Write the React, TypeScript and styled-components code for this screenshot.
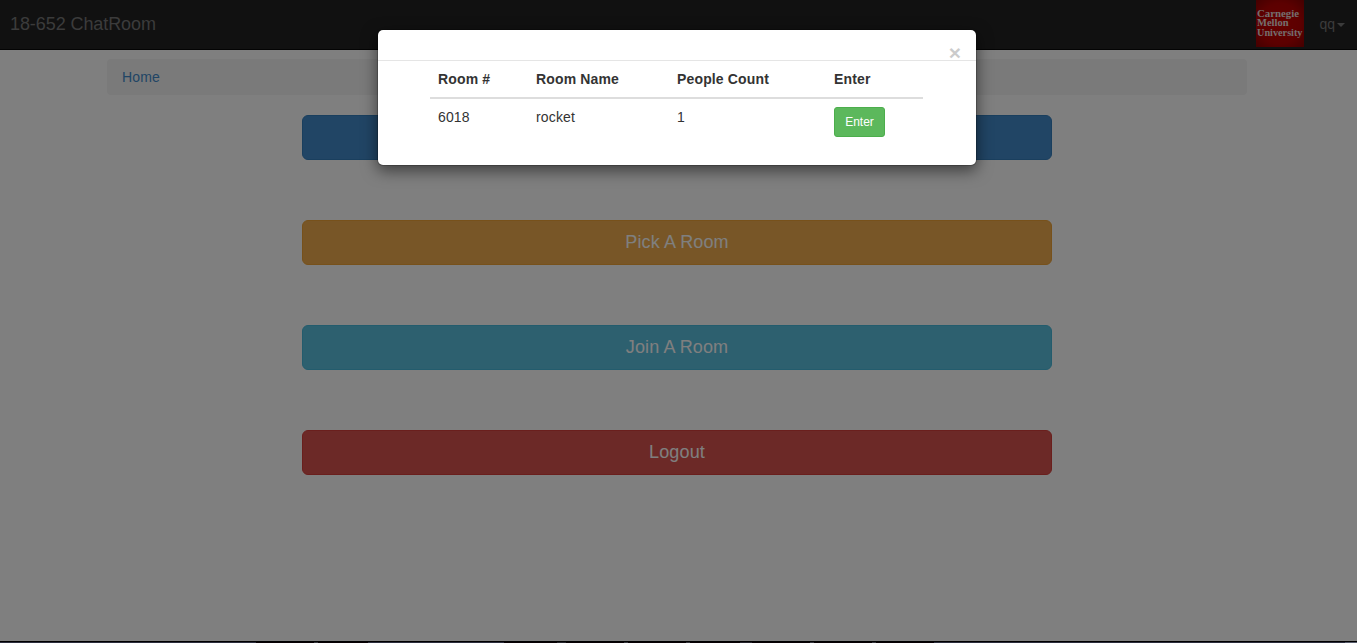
import React from "react";
import styled, { createGlobalStyle } from "styled-components";

const GlobalStyle = createGlobalStyle`
  *, *::before, *::after { box-sizing: border-box; }
  html, body { margin: 0; height: 643px; overflow: hidden; }
  body {
    font-family: "Liberation Sans", Arial, sans-serif;
    font-size: 14px;
    line-height: 20px;
    color: #333;
    background: #fff;
  }
`;

const Screen = styled.div`
  position: relative;
  display: flex;
  flex-direction: column;
  height: 643px;
  overflow: hidden;
`;

const Page = styled.div`
  flex: 1;
  display: flex;
  flex-direction: column;
`;

const Navbar = styled.nav`
  display: flex;
  justify-content: space-between;
  height: 50px;
  background: #222;
  border-bottom: 1px solid #080808;
  color: #777;
`;

const Brand = styled.a`
  padding: 14px 10px;
  font-size: 18px;
  letter-spacing: -0.08px;
`;

const NavRight = styled.div`
  display: flex;
  align-items: flex-start;
`;

const Logo = styled.svg`
  display: block;
  width: 48px;
  height: 47px;
`;

const UserMenu = styled.a`
  display: flex;
  align-items: center;
  gap: 2px;
  height: 48px;
  padding: 0 12px 0 15px;
`;

const Caret = styled.span`
  margin-top: 2px;
  border-top: 4px solid currentColor;
  border-left: 4px solid transparent;
  border-right: 4px solid transparent;
`;

const Breadcrumb = styled.div`
  width: 1140px;
  height: 36px;
  margin: 9px 0 20px 107px;
  padding: 8px 15px;
  border-radius: 4px;
  background: #f5f5f5;
`;

const HomeLink = styled.a`
  color: #428bca;
  letter-spacing: 0.15px;
`;

const Actions = styled.div`
  display: flex;
  flex-direction: column;
  gap: 60px;
  width: 750px;
  margin-left: 302px;
`;

const ActionButton = styled.button<{ $fill: string; $edge: string }>`
  height: 45px;
  padding: 0 0 2px;
  border: 1px solid ${(p) => p.$edge};
  border-radius: 6px;
  background: ${(p) => p.$fill};
  color: #fff;
  font: 18px/24px "Liberation Sans", Arial, sans-serif;
  letter-spacing: 0.12px;
`;

const Backdrop = styled.div`
  position: absolute;
  inset: 0 0 2px;
  display: flex;
  justify-content: flex-start;
  align-items: flex-start;
  padding: 29px 0 0 377px;
  background: rgba(0, 0, 0, 0.5);
`;

const Dialog = styled.section`
  width: 600px;
  height: 137px;
  border: 1px solid rgba(0, 0, 0, 0.2);
  border-radius: 6px;
  background: #fff;
  background-clip: padding-box;
  box-shadow: 0 5px 15px rgba(0, 0, 0, 0.5);
`;

const DialogHeader = styled.header`
  display: flex;
  justify-content: flex-end;
  height: 31px;
  padding: 12px 15px 0;
  border-bottom: 1px solid #e5e5e5;
`;

const CloseButton = styled.button`
  height: 21px;
  padding: 0;
  border: 0;
  background: transparent;
  color: #000;
  font: bold 21px/21px "Liberation Sans", Arial, sans-serif;
  text-shadow: 0 1px 0 #fff;
  opacity: 0.2;
`;

const RoomTable = styled.table`
  width: 493px;
  margin-left: 52px;
  border-collapse: collapse;
  table-layout: fixed;
`;

const HeadCell = styled.th<{ $width: number }>`
  width: ${(p) => p.$width}px;
  height: 37px;
  padding: 7px 8px 8px;
  border-bottom: 2px solid #ddd;
  text-align: left;
  letter-spacing: 0.15px;
`;

const Cell = styled.td`
  padding: 8px;
  vertical-align: top;
  letter-spacing: 0.15px;
`;

const EnterButton = styled.button`
  display: block;
  width: 51px;
  height: 30px;
  padding: 0;
  border: 1px solid #4cae4c;
  border-radius: 3px;
  background: #5cb85c;
  color: #fff;
  font: 12px/18px "Liberation Sans", Arial, sans-serif;
`;

const Taskbar = styled.div`
  display: flex;
  height: 2px;
  border-top: 1px solid #000;
  background: #2b2d3d;
`;

const TaskSegment = styled.span<{ $width: number; $color: string }>`
  width: ${(p) => p.$width}px;
  height: 1px;
  background: ${(p) => p.$color};
`;

const actions = [
  { label: "Create A Room", fill: "#428bca", edge: "#357ebd" },
  { label: "Pick A Room", fill: "#f0ad4e", edge: "#eea236" },
  { label: "Join A Room", fill: "#5bc0de", edge: "#46b8da" },
  { label: "Logout", fill: "#d9534f", edge: "#d43f3a" },
];

const columns = [
  { title: "Room #", width: 98 },
  { title: "Room Name", width: 141 },
  { title: "People Count", width: 157 },
  { title: "Enter", width: 97 },
];

const rooms = [{ id: 6018, name: "rocket", people: 1 }];

const taskSegments: [number, string][] = [
  [256, "#2b2d3d"], [58, "#080004"], [4, "#34343c"], [50, "#080004"],
  [136, "#2b2d3d"], [53, "#080004"], [9, "#25242c"], [58, "#080004"],
  [4, "#34343c"], [58, "#080004"], [4, "#34343c"], [50, "#080004"],
  [12, "#25242c"], [58, "#080004"], [4, "#34343c"], [58, "#080004"],
  [4, "#34343c"], [58, "#080004"], [411, "#2b2d3d"], [12, "#555a6a"],
];

const UniversityLogo = () => (
  <Logo viewBox="0 0 48 47" aria-label="Carnegie Mellon University">
    <defs>
      <radialGradient id="logoRed" cx="50%" cy="50%" r="72%">
        <stop offset="0" stopColor="#c80000" />
        <stop offset="0.6" stopColor="#b80000" />
        <stop offset="1" stopColor="#850000" />
      </radialGradient>
    </defs>
    <rect width="48" height="47" fill="url(#logoRed)" />
    <g
      fill="#e8dcdc"
      fontFamily="Liberation Serif, serif"
      fontWeight="bold"
      fontSize="10.5"
    >
      <text x="1" y="16.5" textLength="42" lengthAdjust="spacingAndGlyphs">Carnegie</text>
      <text x="1" y="26" textLength="31.5" lengthAdjust="spacingAndGlyphs">Mellon</text>
      <text x="1" y="35.5" textLength="45.5" lengthAdjust="spacingAndGlyphs">University</text>
    </g>
  </Logo>
);

export default function App() {
  return (
    <>
      <GlobalStyle />
      <Screen>
        <Page>
          <Navbar>
            <Brand>18-652 ChatRoom</Brand>
            <NavRight>
              <UniversityLogo />
              <UserMenu>
                qq
                <Caret />
              </UserMenu>
            </NavRight>
          </Navbar>
          <Breadcrumb>
            <HomeLink>Home</HomeLink>
          </Breadcrumb>
          <Actions>
            {actions.map((a) => (
              <ActionButton key={a.label} $fill={a.fill} $edge={a.edge}>
                {a.label}
              </ActionButton>
            ))}
          </Actions>
        </Page>
        <Taskbar>
          {taskSegments.map(([width, color], i) => (
            <TaskSegment key={i} $width={width} $color={color} />
          ))}
        </Taskbar>
        <Backdrop>
          <Dialog role="dialog">
            <DialogHeader>
              <CloseButton aria-label="Close">×</CloseButton>
            </DialogHeader>
            <RoomTable>
              <thead>
                <tr>
                  {columns.map((c) => (
                    <HeadCell key={c.title} $width={c.width}>
                      {c.title}
                    </HeadCell>
                  ))}
                </tr>
              </thead>
              <tbody>
                {rooms.map((r) => (
                  <tr key={r.id}>
                    <Cell>{r.id}</Cell>
                    <Cell>{r.name}</Cell>
                    <Cell>{r.people}</Cell>
                    <Cell>
                      <EnterButton>Enter</EnterButton>
                    </Cell>
                  </tr>
                ))}
              </tbody>
            </RoomTable>
          </Dialog>
        </Backdrop>
      </Screen>
    </>
  );
}
